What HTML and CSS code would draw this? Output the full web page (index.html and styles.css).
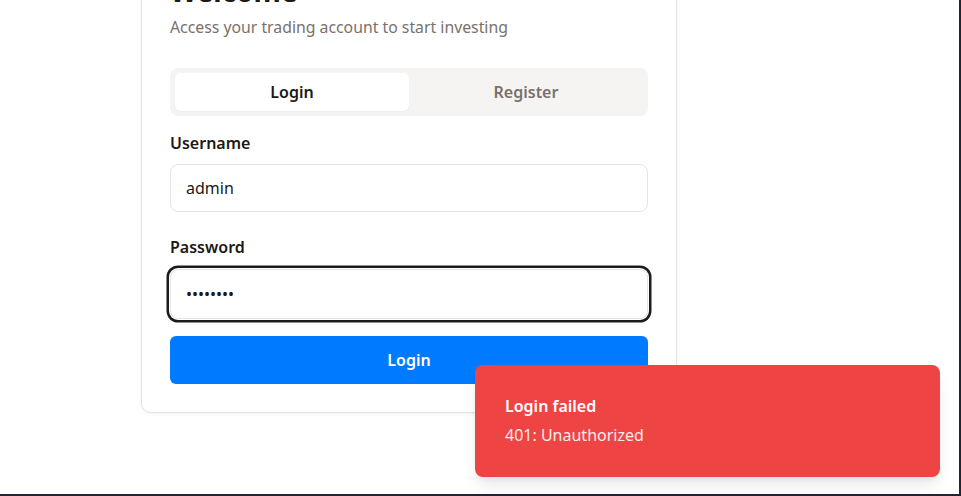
FILE: index.html
```html
<!DOCTYPE html>
<html lang="en">
<head>
<meta charset="utf-8">
<title>Login</title>
<link rel="stylesheet" href="styles.css">
</head>
<body>
<div class="viewport">
  <main class="page">
    <section class="card">
      <h1 class="title">Welcome</h1>
      <p class="subtitle">Access your trading account to start investing</p>
      <div class="tabs">
        <button class="tab tab-active" type="button">Login</button>
        <button class="tab" type="button">Register</button>
      </div>
      <form class="form">
        <label class="label" for="username">Username</label>
        <input class="input" id="username" type="text" value="admin">
        <label class="label label-gap" for="password">Password</label>
        <input class="input input-focus" id="password" type="password" value="password">
        <button class="submit" type="button">Login</button>
      </form>
    </section>
  </main>
  <div class="toast">
    <div class="toast-title">Login failed</div>
    <div class="toast-desc">401: Unauthorized</div>
  </div>
</div>
</body>
</html>
```

FILE: styles.css
```css
* { box-sizing: border-box; }
html, body { margin: 0; padding: 0; background: #1f2533; }
body {
  font-family: "Noto Sans", "Open Sans", sans-serif;
  color: #1c1917;
}
.viewport {
  position: relative;
  width: 959px;
  height: 494px;
  background: #ffffff;
  overflow: hidden;
}
.page {
  display: flex;
  padding-left: 141px;
}
.card {
  width: 536px;
  margin-top: -56px;
  padding: 28px;
  border: 1px solid #e7e5e4;
  border-radius: 10px;
  background: #fff;
  box-shadow: 0 1px 3px rgba(0,0,0,0.06);
}
.title {
  margin: 0 0 6px;
  font-size: 28px;
  line-height: 36px;
  font-weight: 700;
}
.subtitle {
  margin: 0;
  font-size: 15.8px;
  line-height: 24px;
  color: #78716c;
}
.tabs {
  margin-top: 29px;
  display: grid;
  grid-template-columns: 1fr 1fr;
  padding: 5px;
  height: 48px;
  background: #f5f4f2;
  border-radius: 8px;
}
.tab {
  border: 0;
  background: transparent;
  font: inherit;
  font-size: 16px;
  font-weight: 600;
  color: #78716c;
  border-radius: 6px;
  cursor: pointer;
}
.tab-active {
  background: #fff;
  color: #1c1917;
  box-shadow: 0 1px 2px rgba(0,0,0,0.04);
}
.form {
  display: flex;
  flex-direction: column;
  margin-top: 15px;
}
.label {
  font-size: 16px;
  line-height: 24px;
  font-weight: 600;
  margin-bottom: 9px;
}
.label-gap { margin-top: 23px; }
.input {
  height: 48px;
  padding: 0 15px;
  border: 1px solid #e7e5e4;
  border-radius: 8px;
  font: inherit;
  font-size: 16px;
  color: #1c1917;
  background: #fff;
  outline: none;
}
.input-focus {
  margin-top: 1px;
  height: 50px;
  box-shadow: 0 0 0 1px #fff, 0 0 0 3.5px #1c1c1c;
}
.submit {
  margin-top: 17px;
  height: 48px;
  border: 0;
  border-radius: 6px;
  background: #007bff;
  color: #fff;
  font: inherit;
  font-size: 16px;
  font-weight: 600;
  cursor: pointer;
}
.toast {
  position: absolute;
  right: 19px;
  bottom: 17px;
  width: 465px;
  padding: 29px 30px 30px;
  background: #ef4444;
  border-radius: 8px;
  color: #fff;
  box-shadow: 0 10px 15px -3px rgba(0,0,0,0.1), 0 4px 6px -4px rgba(0,0,0,0.1);
}
.toast-title {
  font-size: 16px;
  line-height: 24px;
  font-weight: 600;
}
.toast-desc {
  margin-top: 5px;
  font-size: 16px;
  line-height: 24px;
  opacity: 0.9;
}
```
